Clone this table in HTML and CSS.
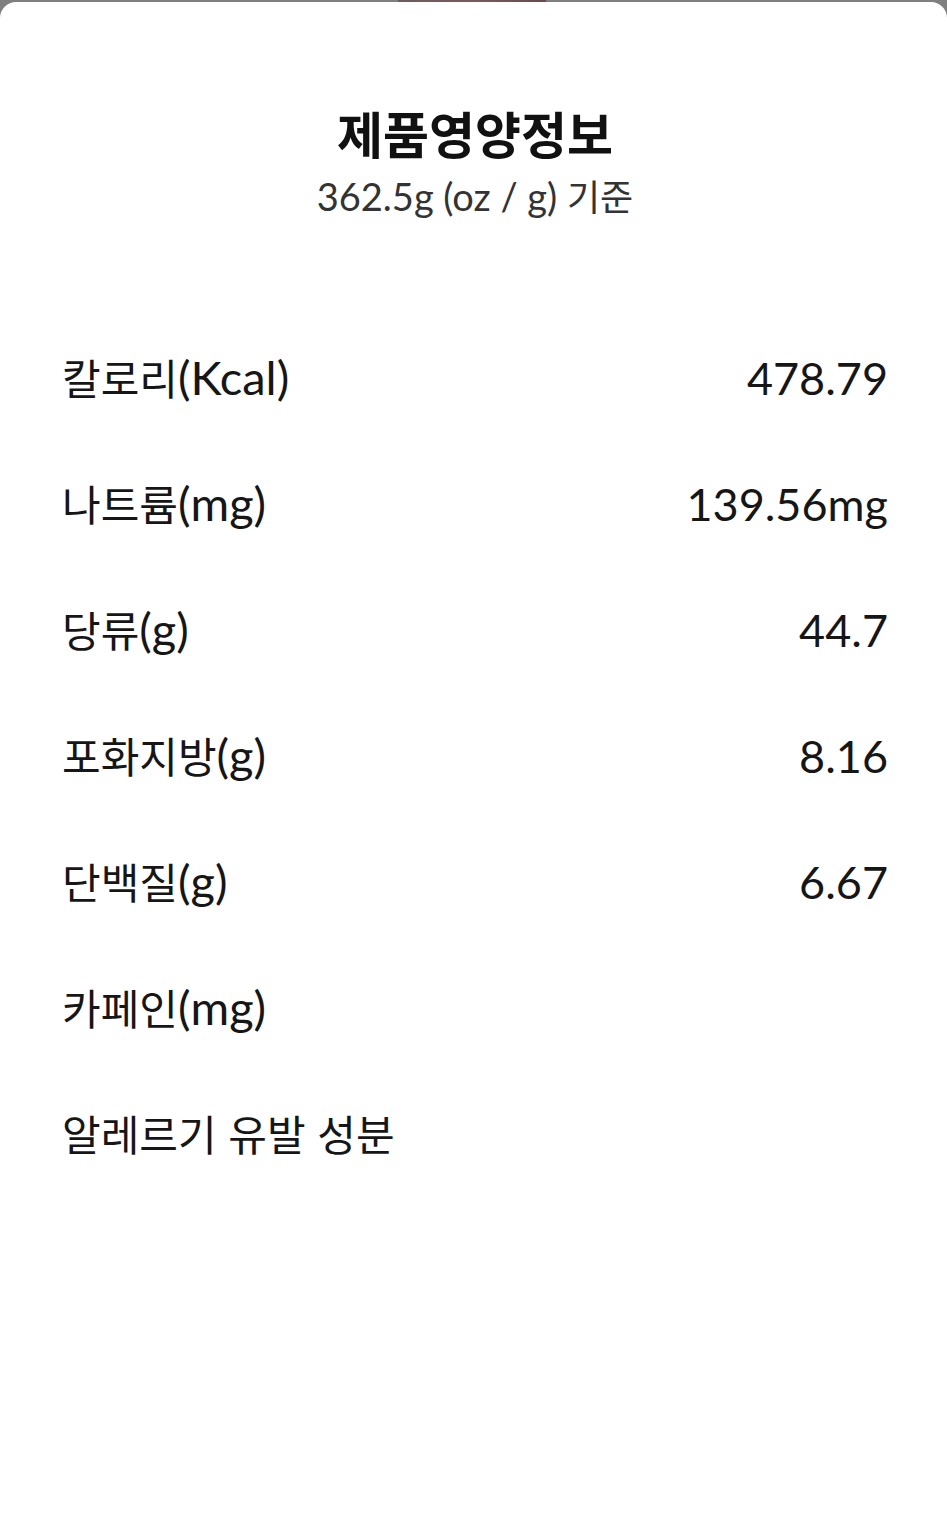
FILE: index.html
```html
<!DOCTYPE html>
<html lang="ko">
<head>
<meta charset="utf-8">
<link rel="stylesheet" href="styles.css">
</head>
<body>
<div class="backdrop"><div class="backdrop-patch"></div></div>
<main class="sheet">
  <header class="sheet-head">
    <h1 class="title">제품영양정보</h1>
    <p class="subtitle">362.5g (oz / g) <span class="ko">기준</span></p>
  </header>
  <ul class="rows">
    <li class="row"><span class="label"><span class="ko">칼로리</span>(Kcal)</span><span class="value">478.79</span></li>
    <li class="row"><span class="label"><span class="ko">나트륨</span>(mg)</span><span class="value">139.56mg</span></li>
    <li class="row"><span class="label"><span class="ko">당류</span>(g)</span><span class="value">44.7</span></li>
    <li class="row"><span class="label"><span class="ko">포화지방</span>(g)</span><span class="value">8.16</span></li>
    <li class="row"><span class="label"><span class="ko">단백질</span>(g)</span><span class="value">6.67</span></li>
    <li class="row"><span class="label"><span class="ko">카페인</span>(mg)</span><span class="value"></span></li>
    <li class="row"><span class="label"><span class="ko">알레르기 유발 성분</span></span><span class="value"></span></li>
  </ul>
</main>
</body>
</html>
```
FILE: styles.css
```css
html, body {
  margin: 0;
  padding: 0;
}
body {
  background: #7f7f7f;
  font-family: "Lato", "Noto Sans CJK KR", sans-serif;
  color: #111;
  overflow: hidden;
}
.backdrop {
  height: 2px;
  display: flex;
}
.backdrop-patch {
  margin-left: 398px;
  width: 148px;
  background: linear-gradient(90deg, #6e5c5e, #7a5a5e 50%, #6a4a50);
}
.sheet {
  background: #fff;
  border-radius: 16px 16px 0 0;
  height: 1536px;
  padding: 0 59px 0 62px;
  box-sizing: border-box;
}
.sheet-head {
  padding-top: 100px;
  text-align: center;
}
.title {
  margin: 0;
  font-family: "Noto Sans CJK KR", sans-serif;
  font-weight: 700;
  font-size: 50px;
  line-height: 60px;
  color: #111;
}
.subtitle {
  margin: 8px 0 0;
  font-size: 38px;
  line-height: 50px;
  color: #333;
}
.ko {
  font-family: "Noto Sans CJK KR", sans-serif;
}
.subtitle .ko {
  font-size: 36px;
}
.rows {
  list-style: none;
  margin: 0;
  padding: 126px 0 0;
}
.row {
  display: flex;
  justify-content: space-between;
  align-items: baseline;
  height: 126px;
  font-size: 45px;
  line-height: 60px;
  color: #161616;
}
.label {
  font-size: 47px;
}
.row .ko {
  font-size: 42px;
}
```
